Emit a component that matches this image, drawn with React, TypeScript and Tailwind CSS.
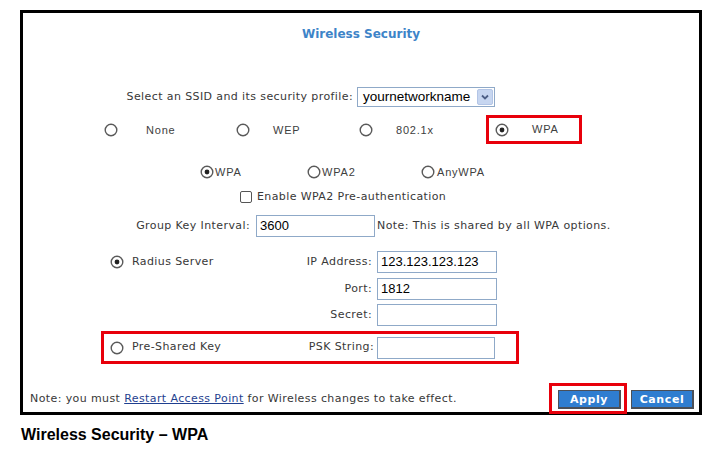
import type { ReactNode } from "react"

const body = "font-['DejaVu_Sans',sans-serif] text-[11px] tracking-[0.4px] text-[#383838]"
const opt = "font-['Liberation_Sans',Arial,sans-serif] text-[11px] tracking-[0.8px] text-[#404040]"

function Radio({ checked = false }: { checked?: boolean }) {
  return (
    <svg width="14" height="14" viewBox="0 0 14 14" className="shrink-0">
      <circle cx="7" cy="7" r="5.8" fill="#fff" stroke="#5a5a5a" strokeWidth="1.4" />
      {checked && <circle cx="7" cy="7" r="2.4" fill="#222" />}
    </svg>
  )
}

function Field({ value = "", width = "w-[120px]" }: { value?: string; width?: string }) {
  return (
    <div
      className={`${width} h-[22px] shrink-0 border border-[#8fa9c8] bg-white px-[3px] flex items-center font-['Liberation_Sans',Arial,sans-serif] text-[13px] text-black`}
    >
      {value}
    </div>
  )
}

function FormRow({ left, label, value, mt }: { left?: ReactNode; label: string; value?: string; mt: string }) {
  return (
    <div className={`flex items-center h-[22px] ${mt}`}>
      <div className="w-[349px] flex items-center pl-[87px]">
        {left}
        <span className={`ml-auto ${body}`}>{label}</span>
      </div>
      <div className="ml-[5px]">
        <Field value={value} />
      </div>
    </div>
  )
}

function BlueButton({ children }: { children: ReactNode }) {
  return (
    <button className="w-[63px] h-[19px] bg-[#2f7dd0] border border-[#4b4f57] border-b-2 border-r-2 text-white font-['DejaVu_Sans',sans-serif] font-bold text-[11px] tracking-[0.6px] leading-none flex items-center justify-center">
      {children}
    </button>
  )
}

export default function App() {
  return (
    <div className="w-[720px] h-[450px] bg-white overflow-hidden">
      <div className="ml-[20px] mt-[10px] w-[682px] h-[405px] border-[3px] border-black">
        <div className="mt-[14px] h-[14px] leading-[14px] text-center font-['DejaVu_Sans',sans-serif] font-bold text-[12px] text-[#3d84c8]">
          Wireless Security
        </div>

        <div className="mt-[46px] h-[20px] flex items-center">
          <div className={`w-[330px] text-right ${body}`}>Select an SSID and its security profile:</div>
          <div className="ml-[4px] w-[138px] h-[20px] border border-[#8fa9c8] bg-white flex items-center">
            <span className="pl-[5px] font-['Liberation_Sans',Arial,sans-serif] text-[13.5px] text-black">
              yournetworkname
            </span>
            <div className="ml-auto mr-[1px] w-[16px] h-[16px] bg-[#c7d6f0] border border-[#b3c5e6] rounded-[2px] flex items-center justify-center">
              <svg width="8" height="6" viewBox="0 0 8 6">
                <path d="M1 1.5 L4 4.5 L7 1.5" fill="none" stroke="#4d5f85" strokeWidth="1.8" />
              </svg>
            </div>
          </div>
        </div>

        <div className="mt-[8px] h-[28px] flex items-center pl-[81px] pt-[2px]">
          <div className="w-[132px] flex items-center">
            <Radio />
            <span className={`ml-[28px] ${opt}`}>None</span>
          </div>
          <div className="w-[123px] flex items-center">
            <Radio />
            <span className={`ml-[23px] ${opt}`}>WEP</span>
          </div>
          <div className="w-[127px] flex items-center">
            <Radio />
            <span className={`ml-[23px] ${opt}`}>802.1x</span>
          </div>
          <div className="w-[96px] h-[29px] -mt-[2px] border-[3px] border-[#e8000b] flex items-center pl-[6px] pt-[1px]">
            <Radio checked />
            <span className={`ml-[23px] ${opt}`}>WPA</span>
          </div>
        </div>

        <div className="mt-[22px] h-[14px] flex items-center pl-[177px]">
          <div className="w-[107px] flex items-center">
            <Radio checked />
            <span className={`ml-[1px] ${opt}`}>WPA</span>
          </div>
          <div className="w-[114px] flex items-center">
            <Radio />
            <span className={`ml-[1px] ${opt}`}>WPA2</span>
          </div>
          <div className="flex items-center">
            <Radio />
            <span className={`ml-[2px] ${opt}`}>AnyWPA</span>
          </div>
        </div>

        <div className="mt-[11px] h-[14px] flex items-center pl-[217px]">
          <div className="w-[12px] h-[12px] border-[1.4px] border-[#555] rounded-[2px] bg-white" />
          <span className={`ml-[5px] ${body}`}>Enable WPA2 Pre-authentication</span>
        </div>

        <div className="mt-[11px] h-[22px] flex items-center">
          <div className={`w-[227px] text-right ${body}`}>Group Key Interval:</div>
          <div className="ml-[6px]">
            <Field value="3600" width="w-[119px]" />
          </div>
          <span className={`ml-[2px] ${body}`}>Note: This is shared by all WPA options.</span>
        </div>

        <FormRow
          mt="mt-[14px]"
          left={
            <>
              <Radio checked />
              <span className={`ml-[8px] ${body}`}>Radius Server</span>
            </>
          }
          label="IP Address:"
          value="123.123.123.123"
        />
        <FormRow mt="mt-[5px]" label="Port:" value="1812" />
        <FormRow mt="mt-[4px]" label="Secret:" />

        <div className="mt-[5px] ml-[78px] w-[418px] h-[33px] border-[3px] border-[#e8000b] flex items-center pl-[6px]">
          <div className="w-[264px] flex items-center">
            <Radio />
            <span className={`ml-[8px] ${body}`}>Pre-Shared Key</span>
            <span className={`ml-auto ${body}`}>PSK String:</span>
          </div>
          <div className="ml-[3px]">
            <Field width="w-[118px]" />
          </div>
        </div>

        <div className="mt-[19px] h-[31px] flex items-center pl-[7px] pr-[5px]">
          <span className={`${body} pt-[2px]`}>
            Note: you must{" "}
            <a className="text-[#1f3f8f] underline">Restart Access Point</a> for Wireless changes to take effect.
          </span>
          <div className="ml-auto border-[3px] border-[#e8000b] pl-[6px] pr-[3px] pt-[4px] pb-[2px]">
            <BlueButton>Apply</BlueButton>
          </div>
          <div className="ml-[4px] mt-[2px]">
            <BlueButton>Cancel</BlueButton>
          </div>
        </div>
      </div>

      <div className="mt-[10px] ml-[21px] h-[20px] leading-[20px] font-['Liberation_Sans',Arial,sans-serif] font-bold text-[16px] text-black">
        Wireless Security – WPA
      </div>
    </div>
  )
}
